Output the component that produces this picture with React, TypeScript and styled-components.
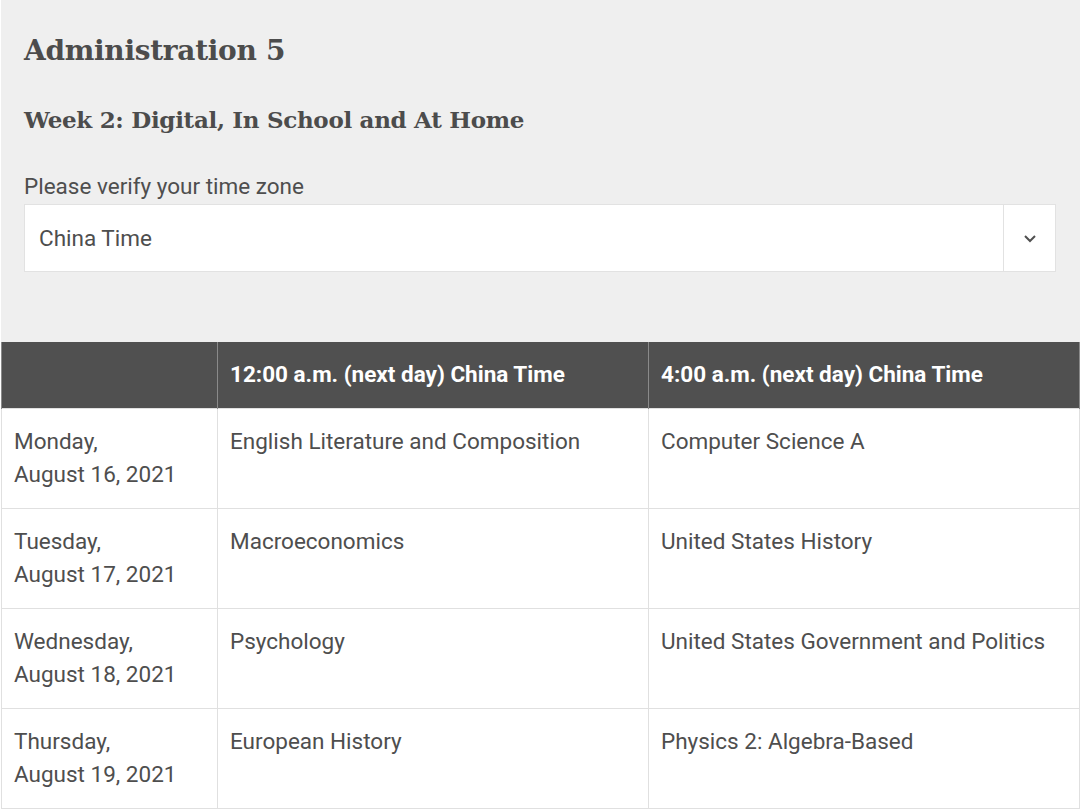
import React from "react";
import styled, { createGlobalStyle } from "styled-components";

const Global = createGlobalStyle`
  html, body { margin: 0; padding: 0; background: #ffffff; }
  body { font-family: Roboto, "Liberation Sans", sans-serif; color: #4e4e4e; }
  * { box-sizing: border-box; }
`;

const Page = styled.div`
  width: 1080px;
  padding-left: 1px;
`;

const Panel = styled.section`
  background: #efefef;
  padding: 30px 24px 70px 23px;
`;

const Title = styled.h1`
  margin: 0;
  font-family: "DejaVu Serif", "Liberation Serif", serif;
  font-weight: bold;
  font-size: 28px;
  line-height: 42px;
  color: #4c4c4c;
  letter-spacing: -0.3px;
`;

const Subtitle = styled.h2`
  margin: 31px 0 0;
  font-family: "DejaVu Serif", "Liberation Serif", serif;
  font-weight: bold;
  font-size: 23px;
  line-height: 34px;
  color: #4c4c4c;
  letter-spacing: -0.3px;
`;

const Label = styled.label`
  display: block;
  margin-top: 36px;
  font-size: 22.5px;
  line-height: 26px;
  color: #4e4e4e;
`;

const Select = styled.div`
  margin-top: 5px;
  display: flex;
  height: 68px;
  background: #ffffff;
  border: 1px solid #e2e2e2;
`;

const SelectValue = styled.div`
  flex: 1;
  display: flex;
  align-items: center;
  padding-left: 14px;
  font-size: 22.5px;
  color: #4e4e4e;
`;

const SelectArrow = styled.div`
  width: 52px;
  border-left: 1px solid #e2e2e2;
  display: flex;
  align-items: center;
  justify-content: center;
`;

const Table = styled.table`
  width: 1078px;
  border-collapse: collapse;
  table-layout: fixed;
  font-size: 22.5px;
  line-height: 33px;
`;

const HeadCell = styled.th`
  background: #505050;
  color: #ffffff;
  font-weight: bold;
  text-align: left;
  height: 66px;
  padding: 0 12px;
  border: 1px solid #8a8a8a;
  border-top: none;
  border-bottom: none;
`;

const Cell = styled.td`
  vertical-align: top;
  height: 100px;
  padding: 16px 12px 0;
  border: 1px solid #e0e0e0;
  color: #4e4e4e;
`;

const rows = [
  ["Monday,", "August 16, 2021", "English Literature and Composition", "Computer Science A"],
  ["Tuesday,", "August 17, 2021", "Macroeconomics", "United States History"],
  ["Wednesday,", "August 18, 2021", "Psychology", "United States Government and Politics"],
  ["Thursday,", "August 19, 2021", "European History", "Physics 2: Algebra-Based"],
];

export default function App() {
  return (
    <Page>
      <Global />
      <Panel>
        <Title>Administration 5</Title>
        <Subtitle>Week 2: Digital, In School and At Home</Subtitle>
        <Label>Please verify your time zone</Label>
        <Select>
          <SelectValue>China Time</SelectValue>
          <SelectArrow>
            <svg width="14" height="9" viewBox="0 0 14 9">
              <path d="M2 2 L7 7 L12 2" fill="none" stroke="#505050" strokeWidth="2" />
            </svg>
          </SelectArrow>
        </Select>
      </Panel>
      <Table>
        <colgroup>
          <col style={{ width: 216 }} />
          <col style={{ width: 431 }} />
          <col style={{ width: 431 }} />
        </colgroup>
        <thead>
          <tr>
            <HeadCell></HeadCell>
            <HeadCell>12:00 a.m. (next day) China Time</HeadCell>
            <HeadCell>4:00 a.m. (next day) China Time</HeadCell>
          </tr>
        </thead>
        <tbody>
          {rows.map((r) => (
            <tr key={r[1]}>
              <Cell>
                {r[0]}
                <br />
                {r[1]}
              </Cell>
              <Cell>{r[2]}</Cell>
              <Cell>{r[3]}</Cell>
            </tr>
          ))}
        </tbody>
      </Table>
    </Page>
  );
}
